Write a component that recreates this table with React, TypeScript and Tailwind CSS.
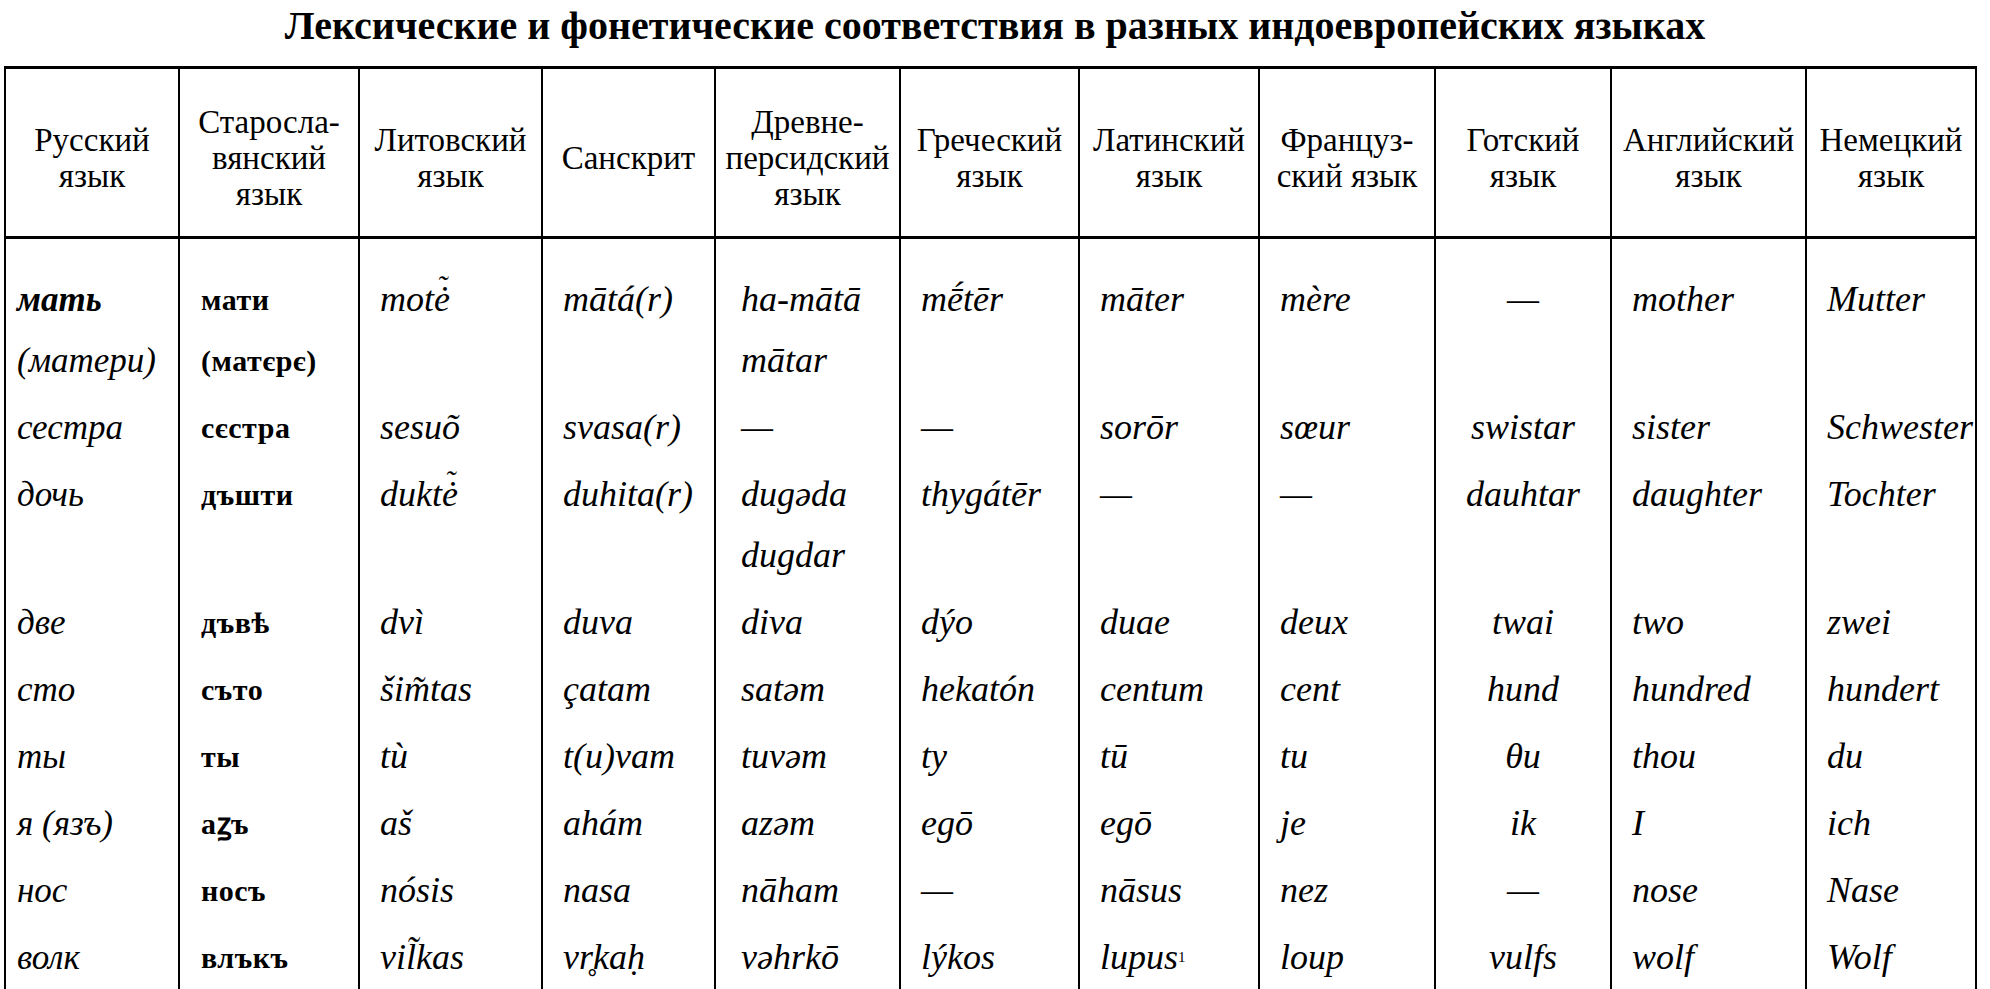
import type { ReactNode } from "react"

// column widths measured from the scan (left border at x≈4)
const GRID =
  "grid grid-cols-[174px_180px_183px_173px_185px_179px_180px_176px_176px_195px_172px]"

const HEADERS: string[][] = [
  ["Русский", "язык"],
  ["Старосла-", "вянский", "язык"],
  ["Литовский", "язык"],
  ["Санскрит"],
  ["Древне-", "персидский", "язык"],
  ["Греческий", "язык"],
  ["Латинский", "язык"],
  ["Француз-", "ский язык"],
  ["Готский", "язык"],
  ["Английский", "язык"],
  ["Немецкий", "язык"],
]

type Cell = ReactNode[]

// ė with a tilde set above it (combining U+0303 lands off to the side in Liberation)
function TildeE() {
  return (
    <span className="relative inline-block">
      ė
      <span className="absolute left-[3px] top-[-14px] text-[30px]">˜</span>
    </span>
  )
}

const ROWS: Cell[][] = [
  [
    [<span className="font-bold">мать</span>, "(матери)"],
    ["мати", "(матєрє)"],
    [<>mot<TildeE /></>],
    ["mātá(r)"],
    ["ha-mātā", "mātar"],
    ["mḗtēr"],
    ["māter"],
    ["mère"],
    ["—"],
    ["mother"],
    ["Mutter"],
  ],
  [["сестра"], ["сєстра"], ["sesuõ"], ["svasa(r)"], ["—"], ["—"], ["sorōr"], ["sœur"], ["swistar"], ["sister"], ["Schwester"]],
  [
    ["дочь"],
    ["дъшти"],
    [<>dukt<TildeE /></>],
    ["duhita(r)"],
    ["dugəda", "dugdar"],
    ["thygátēr"],
    ["—"],
    ["—"],
    ["dauhtar"],
    ["daughter"],
    ["Tochter"],
  ],
  [["две"], ["дъвѣ"], ["dvì"], ["duva"], ["diva"], ["dýo"], ["duae"], ["deux"], ["twai"], ["two"], ["zwei"]],
  [["сто"], ["съто"], ["šim̃tas"], ["çatam"], ["satəm"], ["hekatón"], ["centum"], ["cent"], ["hund"], ["hundred"], ["hundert"]],
  [["ты"], ["ты"], ["tù"], ["t(u)vam"], ["tuvəm"], ["ty"], ["tū"], ["tu"], ["θu"], ["thou"], ["du"]],
  [["я (язъ)"], ["аꙁъ"], ["aš"], ["ahám"], ["azəm"], ["egō"], ["egō"], ["je"], ["ik"], ["I"], ["ich"]],
  [["нос"], ["носъ"], ["nósis"], ["nasa"], ["nāham"], ["—"], ["nāsus"], ["nez"], ["—"], ["nose"], ["Nase"]],
  [
    ["волк"],
    ["влъкъ"],
    ["vil̃kas"],
    ["vr̥kaḥ"],
    ["vəhrkō"],
    ["lýkos"],
    [<>lupus<sup className="text-[15px] not-italic">1</sup></>],
    ["loup"],
    ["vulfs"],
    ["wolf"],
    ["Wolf"],
  ],
]

function cellClass(col: number) {
  const base = "border-l-2 border-black pb-[6px]"
  const last = col === 10 ? "border-r-2" : ""
  if (col === 0) return `${base} pl-[11px] italic text-[35px] ${last}`
  if (col === 1) return `${base} pl-[21px] font-bold text-[30px] tracking-[0.5px] ${last}`
  if (col === 4) return `${base} pl-[25px] italic text-[36px] ${last}`
  if (col === 8) return `${base} text-center italic text-[36px] ${last}`
  return `${base} pl-[20px] italic text-[36px] ${last}`
}

export default function App() {
  return (
    <div className="min-h-screen bg-white text-black font-['Liberation_Serif','DejaVu_Serif',serif] overflow-hidden">
      <div className="h-[66px] pt-[4px] text-center">
        <h1 className="text-[40px] leading-[44px] font-bold">
          Лексические и фонетические соответствия в разных индоевропейских языках
        </h1>
      </div>

      <div className="ml-[4px] w-[1973px] border-t-[3px] border-black">
        {/* header */}
        <div className={`${GRID} h-[170px] border-b-[3px] border-black`}>
          {HEADERS.map((lines, i) => (
            <div
              key={i}
              className={`flex flex-col items-center justify-center pt-[10px] text-center text-[33px] leading-[36px] border-l-2 border-black ${i === 10 ? "border-r-2" : ""}`}
            >
              {lines.map((l, j) => (
                <span key={j} className="whitespace-nowrap">
                  {l}
                </span>
              ))}
            </div>
          ))}
        </div>

        {/* body */}
        <div className="pb-[40px]">
          {ROWS.map((row, r) => (
            <div key={r} className={GRID}>
              {row.map((cell, c) => (
                <div key={c} className={`${cellClass(c)} ${r === 0 ? "pt-[30px]" : ""}`}>
                  {cell.map((line, k) => (
                    <div key={k} className="leading-[61px] whitespace-nowrap">
                      {line}
                    </div>
                  ))}
                </div>
              ))}
            </div>
          ))}
        </div>
      </div>
    </div>
  )
}
